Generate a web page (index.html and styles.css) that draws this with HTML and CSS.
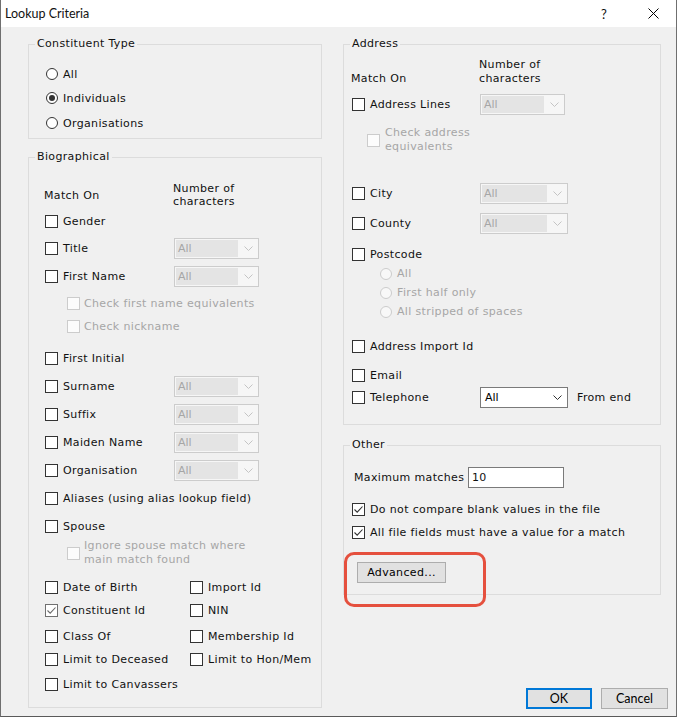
FILE: index.html
```html
<!DOCTYPE html>
<html>
<head>
<meta charset="utf-8">
<title>Lookup Criteria</title>
<link rel="stylesheet" href="styles.css">
</head>
<body>
<div class="window">
  <div class="titlebar">
    <span class="title">Lookup Criteria</span>
    <span class="tb-btn tb-help">?</span>
    <span class="tb-btn tb-close"><svg width="11" height="11" viewBox="0 0 11 11"><path d="M0.5 0.5 L10.5 10.5 M10.5 0.5 L0.5 10.5" stroke="#000" stroke-width="1"/></svg></span>
  </div>
  <div class="content">
    <div class="col col-left">
      <div class="group g-type">
        <div class="group-title">Constituent Type</div>
        <div class="row"><span class="rb"></span><span>All</span></div>
        <div class="row mt4"><span class="rb on"></span><span>Individuals</span></div>
        <div class="row mt5"><span class="rb"></span><span>Organisations</span></div>
      </div>

      <div class="group g-bio">
        <div class="group-title">Biographical</div>
        <div class="hdr">
          <span class="hdr-l">Match On</span>
          <span class="hdr-r">Number of<br>characters</span>
        </div>
        <div class="row mt3"><span class="cb"></span><span>Gender</span></div>
        <div class="row h21 mt7">
          <span class="opt"><span class="cb"></span><span>Title</span></span>
          <span class="dd"><span class="dd-val">All</span><svg class="chev" width="9" height="5" viewBox="0 0 9 5"><path d="M0.5 0.5 L4.5 4.5 L8.5 0.5" fill="none" stroke="#c4c4c4" stroke-width="1"/></svg></span>
        </div>
        <div class="row h21 mt7">
          <span class="opt"><span class="cb"></span><span>First Name</span></span>
          <span class="dd"><span class="dd-val">All</span><svg class="chev" width="9" height="5" viewBox="0 0 9 5"><path d="M0.5 0.5 L4.5 4.5 L8.5 0.5" fill="none" stroke="#c4c4c4" stroke-width="1"/></svg></span>
        </div>
        <div class="row mt6 ind dis"><span class="cb dis"></span><span>Check first name equivalents</span></div>
        <div class="row mt3 ind dis"><span class="cb dis"></span><span>Check nickname</span></div>
        <div class="row mt12"><span class="cb"></span><span>First Initial</span></div>
        <div class="row h21 mt8">
          <span class="opt"><span class="cb"></span><span>Surname</span></span>
          <span class="dd"><span class="dd-val">All</span><svg class="chev" width="9" height="5" viewBox="0 0 9 5"><path d="M0.5 0.5 L4.5 4.5 L8.5 0.5" fill="none" stroke="#c4c4c4" stroke-width="1"/></svg></span>
        </div>
        <div class="row h21 mt7">
          <span class="opt"><span class="cb"></span><span>Suffix</span></span>
          <span class="dd"><span class="dd-val">All</span><svg class="chev" width="9" height="5" viewBox="0 0 9 5"><path d="M0.5 0.5 L4.5 4.5 L8.5 0.5" fill="none" stroke="#c4c4c4" stroke-width="1"/></svg></span>
        </div>
        <div class="row h21 mt7">
          <span class="opt"><span class="cb"></span><span>Maiden Name</span></span>
          <span class="dd"><span class="dd-val">All</span><svg class="chev" width="9" height="5" viewBox="0 0 9 5"><path d="M0.5 0.5 L4.5 4.5 L8.5 0.5" fill="none" stroke="#c4c4c4" stroke-width="1"/></svg></span>
        </div>
        <div class="row h21 mt7">
          <span class="opt"><span class="cb"></span><span>Organisation</span></span>
          <span class="dd"><span class="dd-val">All</span><svg class="chev" width="9" height="5" viewBox="0 0 9 5"><path d="M0.5 0.5 L4.5 4.5 L8.5 0.5" fill="none" stroke="#c4c4c4" stroke-width="1"/></svg></span>
        </div>
        <div class="row mt7"><span class="cb"></span><span>Aliases (using alias lookup field)</span></div>
        <div class="row mt8"><span class="cb"></span><span>Spouse</span></div>
        <div class="row h28 mt3 ind dis"><span class="cb dis"></span><span class="two">Ignore spouse match where<br>main match found</span></div>
        <div class="row mt10 pair">
          <span class="cell"><span class="cb"></span><span>Date of Birth</span></span>
          <span class="cell"><span class="cb"></span><span>Import Id</span></span>
        </div>
        <div class="row mt3 pair">
          <span class="cell"><span class="cb on soft"><svg width="11" height="11" viewBox="0 0 11 11"><path d="M1.5 5.5 L4.2 8.2 L9.5 2.5" fill="none" stroke="#6a6a6a" stroke-width="1.1"/></svg></span><span>Constituent Id</span></span>
          <span class="cell"><span class="cb"></span><span>NIN</span></span>
        </div>
        <div class="row mt6 pair">
          <span class="cell"><span class="cb"></span><span>Class Of</span></span>
          <span class="cell"><span class="cb"></span><span>Membership Id</span></span>
        </div>
        <div class="row mt3 pair">
          <span class="cell"><span class="cb"></span><span>Limit to Deceased</span></span>
          <span class="cell"><span class="cb"></span><span>Limit to Hon/Mem</span></span>
        </div>
        <div class="row mt5"><span class="cb"></span><span>Limit to Canvassers</span></div>
      </div>
    </div>

    <div class="col col-right">
      <div class="group g-addr">
        <div class="group-title">Address</div>
        <div class="hdr hdr-addr">
          <span class="hdr-l">Match On</span>
          <span class="hdr-r">Number of<br>characters</span>
        </div>
        <div class="row h21 mt8">
          <span class="opt"><span class="cb"></span><span>Address Lines</span></span>
          <span class="dd"><span class="dd-val">All</span><svg class="chev" width="9" height="5" viewBox="0 0 9 5"><path d="M0.5 0.5 L4.5 4.5 L8.5 0.5" fill="none" stroke="#c4c4c4" stroke-width="1"/></svg></span>
        </div>
        <div class="row h28 mt11 ind-a dis"><span class="cb dis"></span><span class="two">Check address<br>equivalents</span></div>
        <div class="row h21 mt29">
          <span class="opt"><span class="cb"></span><span>City</span></span>
          <span class="dd wide"><span class="dd-val">All</span><svg class="chev" width="9" height="5" viewBox="0 0 9 5"><path d="M0.5 0.5 L4.5 4.5 L8.5 0.5" fill="none" stroke="#c4c4c4" stroke-width="1"/></svg></span>
        </div>
        <div class="row h21 mt9">
          <span class="opt"><span class="cb"></span><span>County</span></span>
          <span class="dd wide"><span class="dd-val">All</span><svg class="chev" width="9" height="5" viewBox="0 0 9 5"><path d="M0.5 0.5 L4.5 4.5 L8.5 0.5" fill="none" stroke="#c4c4c4" stroke-width="1"/></svg></span>
        </div>
        <div class="row mt10"><span class="cb"></span><span>Postcode</span></div>
        <div class="row h19 ind-r dis"><span class="rb dis"></span><span>All</span></div>
        <div class="row h19 ind-r dis"><span class="rb dis"></span><span>First half only</span></div>
        <div class="row h19 ind-r dis"><span class="rb dis"></span><span>All stripped of spaces</span></div>
        <div class="row mt15"><span class="cb"></span><span>Address Import Id</span></div>
        <div class="row mt9"><span class="cb"></span><span>Email</span></div>
        <div class="row h21 mt2">
          <span class="opt"><span class="cb"></span><span>Telephone</span></span>
          <span class="dd wide en"><span class="dd-val">All</span><svg class="chev" width="9" height="5" viewBox="0 0 9 5"><path d="M0.5 0.5 L4.5 4.5 L8.5 0.5" fill="none" stroke="#333" stroke-width="1"/></svg></span>
          <span class="from-end">From end</span>
        </div>
      </div>

      <div class="group g-other">
        <div class="group-title">Other</div>
        <div class="row h21">
          <span class="mm-label">Maximum matches</span>
          <span class="input">10</span>
        </div>
        <div class="row mt11"><span class="cb on"><svg width="11" height="11" viewBox="0 0 11 11"><path d="M1.5 5.5 L4.2 8.2 L9.5 2.5" fill="none" stroke="#333" stroke-width="1.1"/></svg></span><span>Do not compare blank values in the file</span></div>
        <div class="row mt3"><span class="cb on"><svg width="11" height="11" viewBox="0 0 11 11"><path d="M1.5 5.5 L4.2 8.2 L9.5 2.5" fill="none" stroke="#333" stroke-width="1.1"/></svg></span><span>All file fields must have a value for a match</span></div>
        <div class="row h21 mt20"><button class="btn adv">Advanced...</button></div>
        <div class="highlight"></div>
      </div>

      <div class="footer">
        <button class="btn ok">OK</button>
        <button class="btn cancel">Cancel</button>
      </div>
    </div>
  </div>
</div>
</body>
</html>
```

FILE: styles.css
```css
html, body {
  margin: 0;
  padding: 0;
  background: #ffffff;
}

.window {
  width: 677px;
  height: 717px;
  box-sizing: border-box;
  background: #f0f0f0;
  border-left: 1px solid #6f6f6f;
  border-right: 1px solid #6f6f6f;
  border-bottom: 1px solid #5a5a5a;
  font-family: "DejaVu Sans", sans-serif;
  font-size: 11px;
  letter-spacing: 0.35px;
  color: #111;
  overflow: hidden;
}

.titlebar {
  height: 27px;
  background: #ffffff;
  display: flex;
  align-items: center;
  font-family: "Lato", "Liberation Sans", sans-serif;
  font-size: 12.5px;
  letter-spacing: 0;
}

.title {
  padding-left: 4px;
  flex: 1;
}

.tb-btn {
  width: 46px;
  height: 27px;
  display: flex;
  align-items: center;
  justify-content: center;
}

.tb-help {
  margin-right: 3px;
  font-size: 13px;
}

.content {
  display: flex;
  gap: 21px;
  padding: 17px 0 0 27px;
}

.col-left {
  width: 294px;
  flex: none;
}

.col-right {
  width: 318px;
  flex: none;
  display: flex;
  flex-direction: column;
}

.group {
  position: relative;
  box-sizing: border-box;
  border: 1px solid #dcdcdc;
  display: flex;
  flex-direction: column;
}

.group-title {
  position: absolute;
  top: -8px;
  left: 6px;
  padding: 0 2px;
  line-height: 14px;
  background: #f0f0f0;
}

.g-type {
  height: 95px;
  padding: 19px 0 0 17px;
}

.g-bio {
  height: 551px;
  margin-top: 18px;
  padding: 24px 0 0 16px;
}

.g-addr {
  height: 381px;
  padding: 14px 0 0 8px;
}

.g-other {
  height: 150px;
  margin-top: 20px;
  padding: 21px 0 0 8px;
}

.row {
  display: flex;
  align-items: center;
  height: 20px;
  flex: none;
  white-space: nowrap;
}

.h19 { height: 19px; }
.h21 { height: 21px; }
.h28 { height: 28px; }

.mt2 { margin-top: 2px; }
.mt3 { margin-top: 3px; }
.mt4 { margin-top: 4px; }
.mt5 { margin-top: 5px; }
.mt6 { margin-top: 6px; }
.mt7 { margin-top: 7px; }
.mt8 { margin-top: 8px; }
.mt9 { margin-top: 9px; }
.mt10 { margin-top: 10px; }
.mt11 { margin-top: 11px; }
.mt12 { margin-top: 12px; }
.mt15 { margin-top: 15px; }
.mt20 { margin-top: 20px; }
.mt29 { margin-top: 29px; }

.hdr {
  display: flex;
  align-items: center;
  height: 26px;
  line-height: 13px;
  flex: none;
}

.hdr-l {
  width: 129px;
  margin-left: -1px;
}

.hdr-addr {
  height: 27px;
  align-items: flex-end;
  line-height: 14px;
}

.hdr-addr .hdr-l {
  width: 128px;
}

.cb {
  width: 13px;
  height: 13px;
  box-sizing: border-box;
  border: 1px solid #333;
  background: #fff;
  margin-right: 5px;
  flex: none;
  display: flex;
  align-items: center;
  justify-content: center;
}

.cb.soft {
  border-color: #707070;
}

.cb.dis {
  border-color: #cccccc;
  background: #fcfcfc;
}

.rb {
  width: 12px;
  height: 12px;
  box-sizing: border-box;
  border: 1px solid #333;
  border-radius: 50%;
  background: #fff;
  margin-right: 5px;
  flex: none;
  display: flex;
  align-items: center;
  justify-content: center;
}

.rb.on::after {
  content: "";
  width: 6px;
  height: 6px;
  border-radius: 50%;
  background: #333;
}

.rb.dis {
  border-color: #cccccc;
  background: #f8f8f8;
}

.dis {
  color: #a6a6a6;
}

.ind {
  padding-left: 22px;
}

.ind .cb {
  margin-right: 4px;
}

.ind-a {
  padding-left: 15px;
}

.ind-r {
  padding-left: 28px;
}

.two {
  line-height: 14px;
  white-space: nowrap;
}

.opt {
  width: 129px;
  display: flex;
  align-items: center;
  flex: none;
}

.g-addr .opt {
  width: 128px;
}

.dd {
  width: 85px;
  height: 21px;
  box-sizing: border-box;
  border: 1px solid #cccccc;
  background: #f6f6f6;
  display: flex;
  align-items: center;
  flex: none;
  letter-spacing: 0;
}

.dd.wide {
  width: 88px;
}

.dd-val {
  height: 17px;
  line-height: 17px;
  margin-left: 1px;
  padding-left: 2px;
  flex: 1;
  background: #e4e4e4;
  color: #a6a6a6;
}

.chev {
  margin: 0 5px 0 6px;
  flex: none;
}

.dd.en {
  border-color: #7a7a7a;
  background: #fff;
}

.dd.en .dd-val {
  background: transparent;
  color: #000;
  padding-left: 3px;
}

.from-end {
  margin-left: 9px;
}

.pair .cell {
  width: 145px;
  display: flex;
  align-items: center;
  flex: none;
}

.mm-label {
  width: 114px;
  padding-left: 2px;
  flex: none;
}

.input {
  width: 96px;
  height: 21px;
  box-sizing: border-box;
  border: 1px solid #7a7a7a;
  background: #fff;
  padding-left: 3px;
  line-height: 19px;
}

.btn {
  height: 21px;
  box-sizing: border-box;
  border: 1px solid #adadad;
  background: #e1e1e1;
  padding: 0;
  margin: 0;
  color: #000;
  font-family: "Lato", "Liberation Sans", sans-serif;
  font-size: 12.5px;
}

.adv {
  width: 89px;
  margin-left: 5px;
  font-family: "DejaVu Sans", sans-serif;
  font-size: 11px;
  letter-spacing: 0.35px;
}

.highlight {
  position: absolute;
  left: 0;
  top: 106px;
  width: 142px;
  height: 55px;
  box-sizing: border-box;
  border: 3px solid #e5503e;
  border-radius: 10px;
}

.footer {
  display: flex;
  justify-content: flex-end;
  gap: 9px;
  margin-top: 93px;
  margin-right: -7px;
}

.ok {
  width: 66px;
  border: 2px solid #0078d7;
}

.cancel {
  width: 67px;
}
```
